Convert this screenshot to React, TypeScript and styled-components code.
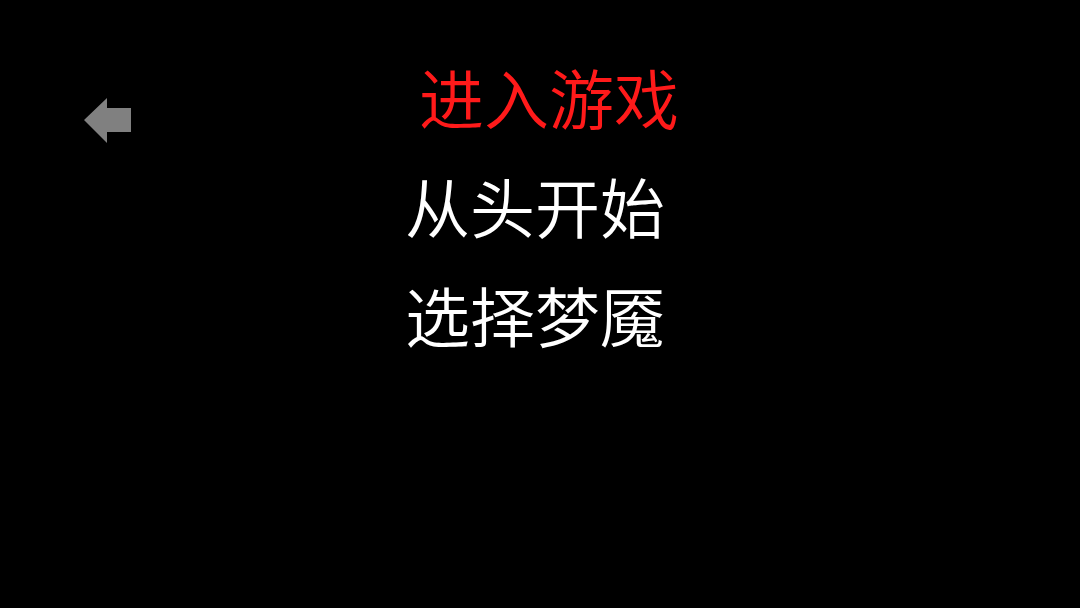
import { createGlobalStyle } from "styled-components";
import styled from "styled-components";

const GlobalStyle = createGlobalStyle`
    html, body {
        margin: 0;
        padding: 0;
        background: #000;
    }
    body {
        font-family: "Noto Sans CJK SC", "Noto Sans", sans-serif;
    }
`;

const Screen = styled.div`
    width: 1080px;
    height: 608px;
    background: #000;
    display: flex;
    align-items: flex-start;
    overflow: hidden;
`;

const BackButton = styled.button`
    margin: 97px 0 0 83px;
    padding: 0;
    width: 49px;
    height: 48px;
    border: none;
    background: transparent;
    cursor: pointer;
    display: flex;
`;

const Menu = styled.ul`
    list-style: none;
    margin: 42px 0 0 273px;
    padding: 0;
    display: flex;
    flex-direction: column;
`;

const Item = styled.li<{ $active?: boolean }>`
    font-size: 65px;
    font-weight: 350;
    line-height: 109px;
    color: ${(p) => (p.$active ? "#ff1a1a" : "#ffffff")};
    padding-left: ${(p) => (p.$active ? "14px" : "0")};
    cursor: pointer;
    white-space: nowrap;
`;

const items = [
    { id: 1, label: "进入游戏", active: true },
    { id: 2, label: "从头开始", active: false },
    { id: 3, label: "选择梦魇", active: false },
];

function App() {
    return (
        <>
            <GlobalStyle />
            <Screen>
                <BackButton aria-label="back">
                    <svg width="49" height="48" viewBox="0 0 49 48">
                        <path d="M1 23 L24 1 L24 11 L48 11 L48 35 L24 35 L24 46 Z" fill="#808080" />
                    </svg>
                </BackButton>
                <Menu>
                    {items.map((item) => (
                        <Item key={item.id} $active={item.active}>
                            {item.label}
                        </Item>
                    ))}
                </Menu>
            </Screen>
        </>
    );
}

export default App;
